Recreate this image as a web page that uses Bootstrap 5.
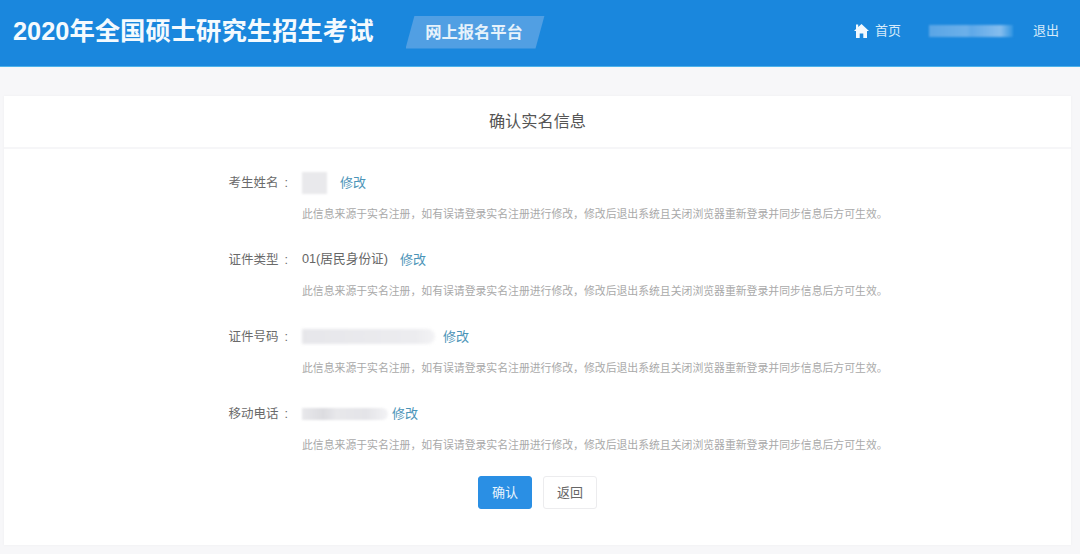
<!DOCTYPE html>
<html lang="zh-CN">
<head>
    <meta charset="UTF-8">
    <meta name="viewport" content="width=device-width, initial-scale=1.0">
    <title>确认实名信息</title>
    <link href="https://cdn.jsdelivr.net/npm/bootstrap@5.3.3/dist/css/bootstrap.min.css" rel="stylesheet">
    <style>
        html, body { height: 554px; overflow: hidden; }
        body { background: #f7f7f9; font-family: "Liberation Sans", "Noto Sans CJK SC", sans-serif; font-size: 13px; color: #666; }
        .top-bar { height: 67px; background: #1a87dd; border-bottom: 1px solid #4db2ea; padding: 0 21px 2px 13px; color: #fff; }
        .site-title { font-size: 25.35px; font-weight: 700; line-height: 1; margin: 0 32px 0 0; color: #f4fafe; }
        .site-tag { width: 139px; height: 33px; background: #519fe3; clip-path: polygon(9px 0, 100% 0, 130px 100%, 0 100%); font-size: 16.3px; font-weight: 700; color: #e6f2fb; padding-right: 2px; }
        .right-links { margin-bottom: 2px; }
        .top-link { font-size: 13px; color: #d5eafa; }
        .home-icon { margin-right: 6px; }
        .user-blur { width: 84px; height: 12px; margin: 0 20px 0 28px; background: linear-gradient(90deg, #59a5e6, #6cb0ea 45%, #5ea8e8 50%, #85bdee 85%, #2f94e2); filter: blur(1px); }
        .info-panel { margin: 29px 9px 0 4px; height: 449px; background: #fff; box-shadow: 0 0 3px rgba(0, 0, 0, .04); }
        .panel-head { height: 53px; border-bottom: 2px solid #f6f6f8; font-size: 16.2px; color: #555; }
        .panel-body { padding-top: 15px; }
        .info-row { height: 77px; }
        .field-line { height: 37px; }
        .field-label { width: 298px; padding: 1px 14px 0 0; text-align: right; color: #6a6a6a; font-size: 12.5px; }
        .label-colon { margin-left: 6px; }
        .field-value { color: #666; font-size: 12.7px; }
        .change-link { color: #4b94b8; text-decoration: none; }
        .hint-text { margin: 0 0 0 298px; font-size: 10.85px; line-height: 27px; color: #a9a9a9; }
        .blur-name { width: 25px; height: 22px; margin-right: 13px; background: #e9e9ec; filter: blur(1px); }
        .blur-id { width: 133px; height: 15px; margin-right: 8px; background: linear-gradient(90deg, #e6e6ea, #ececef 85%, #f3f3f5); filter: blur(1.5px); border-radius: 0 8px 8px 0; }
        .blur-phone { width: 86px; height: 12px; margin-right: 4px; background: linear-gradient(90deg, #e8e8eb, #dcdce0 25%, #e8e8eb 40%, #e4e4e8 75%, #f3f3f5); filter: blur(1px); border-radius: 0 6px 6px 0; }
        .action-row { padding-top: 4px; gap: 11px; }
        .btn-ok { width: 54px; height: 33px; padding: 0; font-size: 13px; background: #2a8fe4; border: 1px solid #2a8fe4; color: #e8f4fd; border-radius: 3px; }
        .btn-back { width: 54px; height: 33px; padding: 0; font-size: 13px; background: #fff; border: 1px solid #ececee; color: #666; border-radius: 3px; }
    </style>
</head>
<body>

<!-- Header -->
<header class="top-bar d-flex align-items-center">
    <h1 class="site-title">2020年全国硕士研究生招生考试</h1>
    <div class="site-tag d-flex align-items-center justify-content-center">网上报名平台</div>
    <div class="right-links ms-auto d-flex align-items-center">
        <svg width="15" height="16" viewBox="0 0 15 16" class="home-icon" aria-hidden="true">
            <path fill="#f2f9fe" d="M7.5 1 15 8h-2v7H9.3v-4.5H5.7V15H2V8H0L2 6.1V1.6h2.2v2.4z"/>
        </svg>
        <a class="top-link text-decoration-none" href="#">首页</a>
        <div class="user-blur"></div>
        <a class="top-link text-decoration-none" href="#">退出</a>
    </div>
</header>

<!-- Real name info -->
<main class="info-panel">
    <div class="panel-head d-flex align-items-center justify-content-center">确认实名信息</div>
    <div class="panel-body">
        <div class="info-row">
            <div class="field-line d-flex align-items-center">
                <div class="field-label">考生姓名<span class="label-colon">:</span></div>
                <div class="blur-name"></div>
                <a class="change-link" href="#">修改</a>
            </div>
            <p class="hint-text">此信息来源于实名注册，如有误请登录实名注册进行修改，修改后退出系统且关闭浏览器重新登录并同步信息后方可生效。</p>
        </div>
        <div class="info-row">
            <div class="field-line d-flex align-items-center">
                <div class="field-label">证件类型<span class="label-colon">:</span></div>
                <div class="field-value me-2">01(居民身份证)</div>
                <a class="change-link ms-1" href="#">修改</a>
            </div>
            <p class="hint-text">此信息来源于实名注册，如有误请登录实名注册进行修改，修改后退出系统且关闭浏览器重新登录并同步信息后方可生效。</p>
        </div>
        <div class="info-row">
            <div class="field-line d-flex align-items-center">
                <div class="field-label">证件号码<span class="label-colon">:</span></div>
                <div class="blur-id"></div>
                <a class="change-link" href="#">修改</a>
            </div>
            <p class="hint-text">此信息来源于实名注册，如有误请登录实名注册进行修改，修改后退出系统且关闭浏览器重新登录并同步信息后方可生效。</p>
        </div>
        <div class="info-row">
            <div class="field-line d-flex align-items-center">
                <div class="field-label">移动电话<span class="label-colon">:</span></div>
                <div class="blur-phone"></div>
                <a class="change-link" href="#">修改</a>
            </div>
            <p class="hint-text">此信息来源于实名注册，如有误请登录实名注册进行修改，修改后退出系统且关闭浏览器重新登录并同步信息后方可生效。</p>
        </div>
        <div class="action-row d-flex justify-content-center">
            <button type="button" class="btn btn-ok">确认</button>
            <button type="button" class="btn btn-back">返回</button>
        </div>
    </div>
</main>

<script src="https://cdn.jsdelivr.net/npm/bootstrap@5.3.3/dist/js/bootstrap.bundle.min.js"></script>
</body>
</html>
